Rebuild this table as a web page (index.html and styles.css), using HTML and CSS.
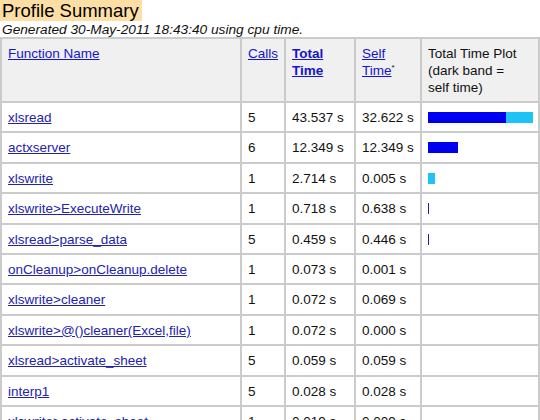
FILE: index.html
```html
<!DOCTYPE html>
<html>
<head>
<meta charset="utf-8">
<link rel="stylesheet" href="styles.css">
</head>
<body>
<div class="title">Profile Summary</div>
<div class="gen">Generated 30-May-2011 18:43:40 using cpu time.</div>
<table class="prof">
<colgroup>
<col class="c1"><col class="c2"><col class="c3"><col class="c4"><col class="c5">
</colgroup>
<thead>
<tr>
<th><a href="#">Function Name</a></th>
<th><a href="#">Calls</a></th>
<th><a href="#" class="b">Total Time</a></th>
<th><a href="#">Self Time</a><sup>*</sup></th>
<th class="plain">Total Time Plot (dark band = self time)</th>
</tr>
</thead>
<tbody>
<tr><td><a href="#">xlsread</a></td><td>5</td><td>43.537 s</td><td>32.622 s</td><td><div class="bar"><span class="dark" style="width:78px"></span><span class="light" style="width:27px"></span></div></td></tr>
<tr><td><a href="#">actxserver</a></td><td>6</td><td>12.349 s</td><td>12.349 s</td><td><div class="bar"><span class="dark" style="width:30px"></span></div></td></tr>
<tr><td><a href="#">xlswrite</a></td><td>1</td><td>2.714 s</td><td>0.005 s</td><td><div class="bar"><span class="light" style="width:7px"></span></div></td></tr>
<tr><td><a href="#">xlswrite&gt;ExecuteWrite </a></td><td>1</td><td>0.718 s</td><td>0.638 s</td><td><div class="bar"><span class="dark thin" style="width:1px"></span></div></td></tr>
<tr><td><a href="#">xlsread&gt;parse_data</a></td><td>5</td><td>0.459 s</td><td>0.446 s</td><td><div class="bar"><span class="dark thin" style="width:1px"></span></div></td></tr>
<tr><td><a href="#">onCleanup&gt;onCleanup.delete</a></td><td>1</td><td>0.073 s</td><td>0.001 s</td><td></td></tr>
<tr><td><a href="#">xlswrite&gt;cleaner</a></td><td>1</td><td>0.072 s</td><td>0.069 s</td><td></td></tr>
<tr><td><a href="#">xlswrite&gt;@()cleaner(Excel,file)</a></td><td>1</td><td>0.072 s</td><td>0.000 s</td><td></td></tr>
<tr><td><a href="#">xlsread&gt;activate_sheet</a></td><td>5</td><td>0.059 s</td><td>0.059 s</td><td></td></tr>
<tr><td><a href="#">interp1</a></td><td>5</td><td>0.028 s</td><td>0.028 s</td><td></td></tr>
<tr><td><a href="#">xlswrite&gt;activate_sheet</a></td><td>1</td><td>0.019 s</td><td>0.009 s</td><td></td></tr>
</tbody>
</table>
</body>
</html>
```
FILE: styles.css
```css
html, body {
  margin: 0;
  padding: 0;
  background: #ffffff;
  font-family: "Liberation Sans", Arial, sans-serif;
  color: #111111;
}
.title {
  display: inline-block;
  background: #fddfa5;
  font-size: 18.5px;
  line-height: 21px;
  padding: 0 3px 0 2px;
  color: #000;
}
.gen {
  font-style: italic;
  font-size: 13.7px;
  line-height: 15px;
  padding-left: 2px;
  margin-top: 1px;
  margin-bottom: 0;
  color: #111;
}
.prof {
  border-collapse: collapse;
  table-layout: fixed;
  width: 538px;
  font-size: 13.5px;
  line-height: 17px;
}
.c1 { width: 240px; }
.c2 { width: 44px; }
.c3 { width: 70px; }
.c4 { width: 66px; }
.c5 { width: 118px; }
.prof th, .prof td {
  border: 2px solid #cbcbcb;
  padding: 6px 5px 5px 6px;
  text-align: left;
  vertical-align: top;
}
.prof th {
  background: #f0f0f0;
  font-weight: normal;
  height: 51px;
  padding-top: 6px;
  padding-bottom: 5px;
}
.prof td {
  height: 17.4px;
  padding-top: 6px;
  padding-bottom: 5px;
}
.prof a {
  color: #2323b0;
  text-decoration: underline;
}
.prof th a { color: #1515cc; }
.prof a.b { font-weight: bold; }
.prof sup {
  font-size: 8px;
  vertical-align: 5px;
  line-height: 0;
}
.prof th.plain { color: #111; padding-right: 14px; }
.bar {
  display: flex;
  height: 11px;
  margin-top: 3px;
}
.bar span { display: block; height: 11px; }
.bar .dark { background: #0000f0; }
.bar .light { background: #1ec3f5; }
.bar .thin { background: #2020a0; }
```
